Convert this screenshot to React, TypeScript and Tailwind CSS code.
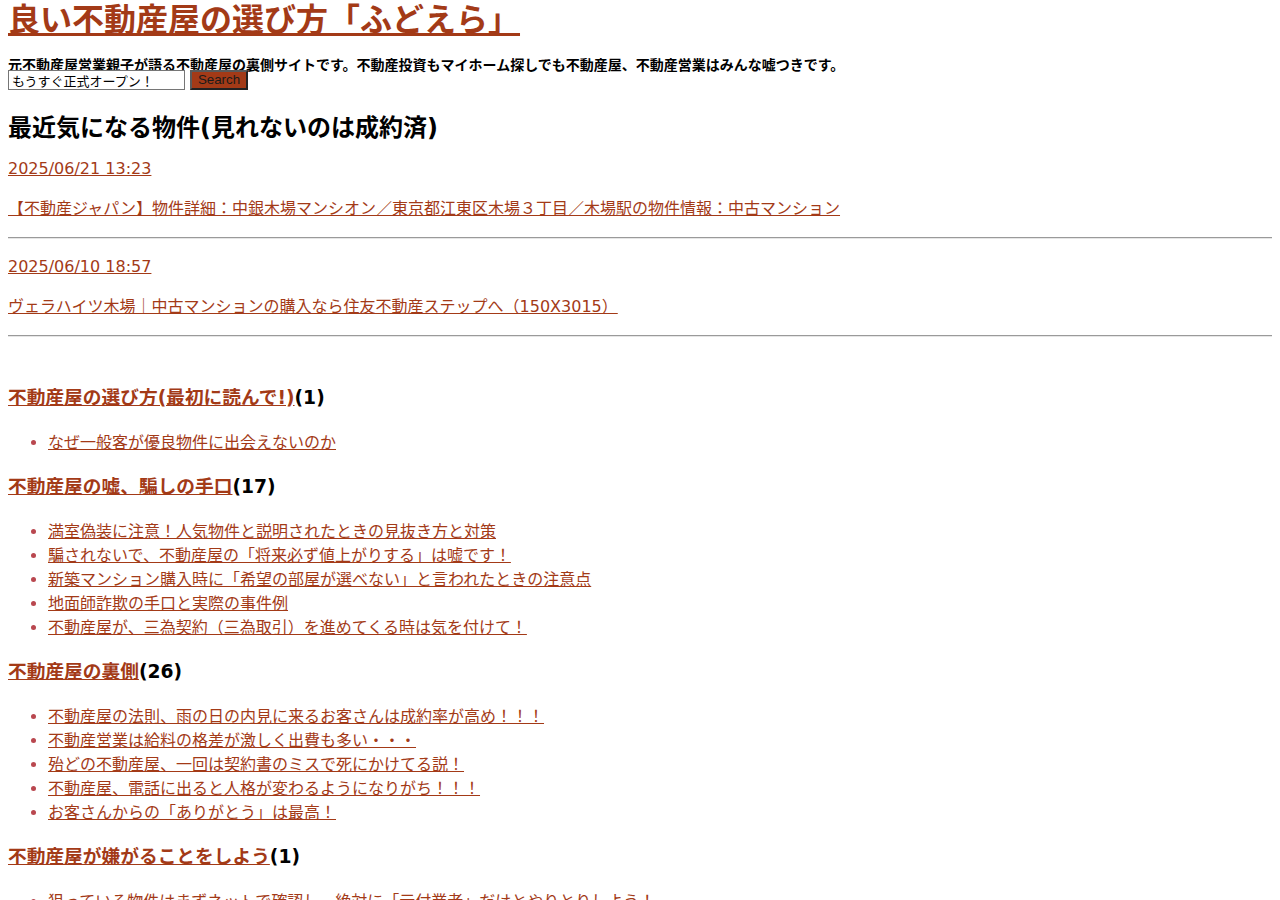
const recent = [
  {
    date: '2025/06/21 13:23',
    title: '【不動産ジャパン】物件詳細：中銀木場マンシオン／東京都江東区木場３丁目／木場駅の物件情報：中古マンション',
  },
  {
    date: '2025/06/10 18:57',
    title: 'ヴェラハイツ木場｜中古マンションの購入なら住友不動産ステップへ（150X3015）',
  },
]

const categories = [
  {
    name: '不動産屋の選び方(最初に読んで!)',
    count: 1,
    posts: ['なぜ一般客が優良物件に出会えないのか'],
  },
  {
    name: '不動産屋の嘘、騙しの手口',
    count: 17,
    posts: [
      '満室偽装に注意！人気物件と説明されたときの見抜き方と対策',
      '騙されないで、不動産屋の「将来必ず値上がりする」は嘘です！',
      '新築マンション購入時に「希望の部屋が選べない」と言われたときの注意点',
      '地面師詐欺の手口と実際の事件例',
      '不動産屋が、三為契約（三為取引）を進めてくる時は気を付けて！',
    ],
  },
  {
    name: '不動産屋の裏側',
    count: 26,
    posts: [
      '不動産屋の法則、雨の日の内見に来るお客さんは成約率が高め！！！',
      '不動産営業は給料の格差が激しく出費も多い・・・',
      '殆どの不動産屋、一回は契約書のミスで死にかけてる説！',
      '不動産屋、電話に出ると人格が変わるようになりがち！！！',
      'お客さんからの「ありがとう」は最高！',
    ],
  },
  {
    name: '不動産屋が嫌がることをしよう',
    count: 1,
    posts: ['狙っている物件はまずネットで確認し、絶対に「元付業者」だけとやりとりしよう！'],
  },
]

export default function App() {
  return (
    <div className="min-h-[900px] bg-white px-2 text-black font-['DejaVu_Sans','Noto_Sans_CJK_JP',sans-serif]">
      {/* ヘッダー */}
      <h1 className="text-[32px] font-bold leading-[40px]">
        <a href="#" className="text-[#a33a17] underline">良い不動産屋の選び方「ふどえら」</a>
      </h1>
      <p className="mt-[19px] h-[11px] text-[14px] font-bold leading-[13px] whitespace-nowrap">
        元不動産屋営業親子が語る不動産屋の裏側サイトです。不動産投資もマイホーム探しでも不動産屋、不動産営業はみんな嘘つきです。
      </p>
      <form className="flex items-start gap-[5px]" onSubmit={e => e.preventDefault()}>
        <input
          type="text"
          defaultValue="もうすぐ正式オープン！"
          className="h-[20px] w-[177px] border border-[#767676] bg-white px-[3px] text-[13px] leading-[18px] outline-none font-['Noto_Sans_CJK_JP',sans-serif]"
        />
        <button
          type="submit"
          className="h-[20px] w-[58px] border-2 border-t-[#5a5a5a] border-l-[#5a5a5a] border-r-[#222] border-b-[#222] bg-[#a33a17] text-[13.33px] leading-[14px] text-[#1a1a1a] font-['Liberation_Sans',Arial,sans-serif]"
        >
          Search
        </button>
      </form>

      {/* 最近気になる物件 */}
      <h2 className="mt-[20px] text-[24px] font-bold leading-[36px]">最近気になる物件(見れないのは成約済)</h2>
      {recent.map((item, i) => (
        <div key={item.date}>
          <p className={i === 0 ? 'mt-[11px] text-[16px] leading-[24px]' : 'mt-[16px] text-[16px] leading-[24px]'}>
            <a href="#" className="text-[#a33a17] underline">{item.date}</a>
          </p>
          <p className="mt-[16px] mb-[16px] text-[16px] leading-[24px]">
            <a href="#" className="text-[#a33a17] underline">{item.title}</a>
          </p>
          <hr className="border-t border-b border-t-[#9a9a9a] border-b-[#e6e6e6]" />
        </div>
      ))}

      {/* カテゴリー */}
      <div className="mt-[49px]">
        {categories.map(cat => (
          <div key={cat.name} className="mt-[20px] first:mt-0">
            <h3 className="text-[18.72px] font-bold leading-[24px]">
              <a href="#" className="text-[#a33a17] underline">{cat.name}</a>({cat.count})
            </h3>
            <ul className="mt-[21px] list-disc pl-10 text-[16px] leading-[24px] marker:text-[#b9474f]">
              {cat.posts.map(p => (
                <li key={p}>
                  <a href="#" className="text-[#a33a17] underline">{p}</a>
                </li>
              ))}
            </ul>
          </div>
        ))}
      </div>
    </div>
  )
}
